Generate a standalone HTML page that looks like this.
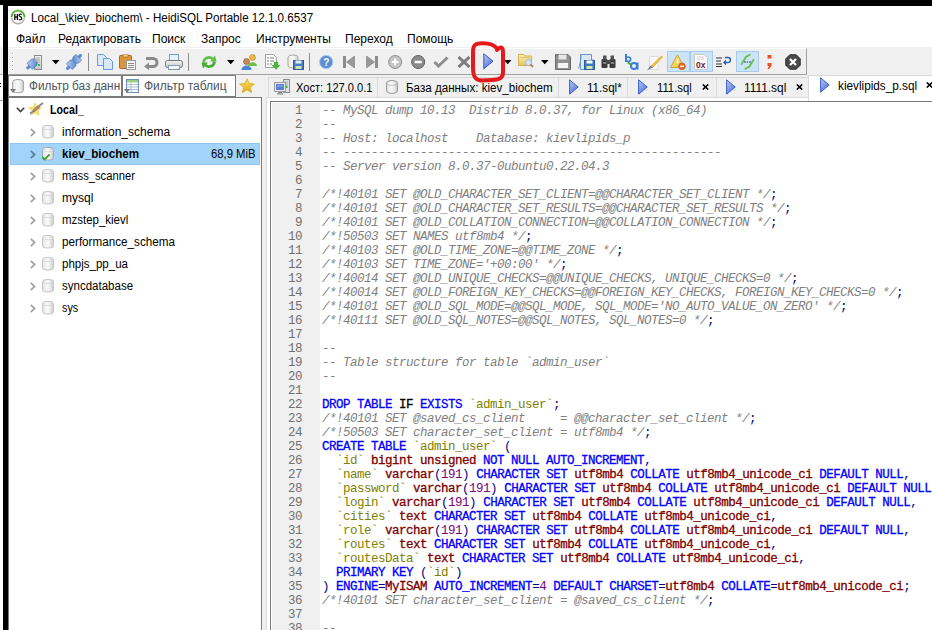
<!DOCTYPE html>
<html><head><meta charset="utf-8">
<style>
*{margin:0;padding:0;box-sizing:border-box}
html,body{width:932px;height:630px;overflow:hidden;background:#fff}
body{position:relative;font-family:"Liberation Sans",sans-serif;font-size:12px;color:#000}
.a{position:absolute}
#blktop{left:0;top:0;width:932px;height:6px;background:#000}
#blkleft{left:3px;top:0;width:5px;height:630px;background:#000}
#strip{left:0;top:5px;width:3px;height:625px;background:#fff}
#title{left:31px;top:11px;font-size:12px;transform:scaleX(0.967);transform-origin:0 0;white-space:nowrap;color:#000}
.menu{top:32px;font-size:12px;white-space:nowrap}
#tbarea{left:8px;top:47px;width:924px;height:28px;background:#f0f0f0}
#tb{left:8px;top:48px;width:799px;height:27px;border-top:1px solid #fff;border-right:1px solid #a0a0a0;border-bottom:1px solid #a0a0a0}
#tabrow{left:8px;top:75px;width:924px;height:23px;background:#f0f0f0}
.fbox{top:75px;height:22px;background:#fff;border:1px solid #7a7a7a;overflow:hidden;white-space:nowrap}
.fbox span{position:absolute;left:21px;top:3px;color:#4d5560;font-size:12px}
#tree{left:8px;top:97px;width:254px;height:540px;border:1px solid #7a7a7a;background:#fff}
#sheet{left:266px;top:97px;width:666px;height:533px;background:#fff;border-left:1px solid #dadada;border-top:1px solid #dadada}
#splitbg{left:262px;top:97px;width:4px;height:533px;background:#f0f0f0}
#editor{left:270px;top:101px;width:670px;height:540px;border:1px solid #7a7a7a;background:#fff}
#gutter{left:272px;top:103px;width:48px;height:527px;background:#f0f0f0}
#code{left:322px;top:104px;font-family:"Liberation Mono",monospace;font-size:12.5px;letter-spacing:-0.5px;line-height:14px;white-space:pre}
#gnums{left:271px;top:104px;width:31px;font-family:"Liberation Mono",monospace;font-size:12.5px;letter-spacing:-0.5px;line-height:14px;text-align:right;color:#707070}
.ln{height:14px}
.gn{height:14px}
.c{color:#808080;font-style:italic}
.k{color:#0000ff;-webkit-text-stroke:0.3px #0000ff}
.f{color:#000;-webkit-text-stroke:0.3px #000}
.t{color:#800000;-webkit-text-stroke:0.3px #800000}
.n{color:#800080}
.s{color:#000080}
.q{color:#808000}
.trow{left:9px;height:22px;width:252px}
.trow .tx{position:absolute;left:53px;top:4px;white-space:nowrap}
.sel{background:#a2d4fa;border:1px solid #92c6f0}
.ttx{top:81px;white-space:nowrap;transform-origin:0 0}
.trtx{white-space:nowrap}
.tab{top:77px;height:21px;background:#f0f0f0;border:1px solid #d9d9d9;border-bottom:none;white-space:nowrap}
.tab .tx{position:absolute;top:4px}
</style></head><body>
<div class="a" id="blktop"></div>
<div class="a" id="strip"></div>
<div class="a" style="left:0;top:47px;width:3px;height:27px;background:#f0f0f0"></div>
<div class="a" style="left:0;top:74px;width:3px;height:1px;background:#b0b0b0"></div>
<div class="a" style="left:0;top:83px;width:1px;height:1px;background:#000"></div>
<div class="a" style="left:0;top:86px;width:1px;height:1px;background:#000"></div>
<div class="a" style="left:0;top:100px;width:3px;height:1px;background:#a0a0a0"></div>
<div class="a" id="blkleft"></div>

<!-- title -->
<svg class="a" style="left:10px;top:9px" width="16" height="16" viewBox="0 0 16 16"><defs><linearGradient id="hsg" x1="0" y1="0" x2="0" y2="1"><stop offset="0" stop-color="#6cc94a"/><stop offset="0.5" stop-color="#3a9a22"/><stop offset="0.5" stop-color="#c8c8c8"/><stop offset="1" stop-color="#a8a8a8"/></linearGradient></defs><circle cx="8" cy="8" r="7.4" fill="url(#hsg)"/><circle cx="8" cy="8.2" r="5.6" fill="#fff"/><path d="M4.8 5v6M4.8 8h2.6M7.4 5v6" stroke="#111" stroke-width="1.3" fill="none"/><path d="M11.6 5.6 C11 4.8 8.9 4.8 9 6.3 C9.1 7.7 11.8 7.5 11.8 9.4 C11.8 11 9.5 11.2 8.8 10.3" stroke="#111" stroke-width="1.2" fill="none"/></svg>
<div class="a" id="title">Local_\kiev_biochem\ - HeidiSQL Portable 12.1.0.6537</div>

<div class="a menu" style="left:16px">Файл</div>
<div class="a menu" style="left:58px">Редактировать</div>
<div class="a menu" style="left:152px">Поиск</div>
<div class="a menu" style="left:201px">Запрос</div>
<div class="a menu" style="left:256px">Инструменты</div>
<div class="a menu" style="left:345px">Переход</div>
<div class="a menu" style="left:407px">Помощь</div>

<div class="a" id="tbarea"></div>
<div class="a" id="tb"></div>
<svg width="0" height="0" style="position:absolute"><defs>
<linearGradient id="gBlue" x1="0" y1="0" x2="1" y2="1"><stop offset="0" stop-color="#b9d3f3"/><stop offset="1" stop-color="#4f7fc9"/></linearGradient>
<linearGradient id="gPlay" x1="0" y1="0" x2="0.6" y2="1"><stop offset="0" stop-color="#b4c6f2"/><stop offset="0.5" stop-color="#8aa2e6"/><stop offset="1" stop-color="#4f6fd6"/></linearGradient>
<linearGradient id="gGray" x1="0" y1="0" x2="0" y2="1"><stop offset="0" stop-color="#f4f4f4"/><stop offset="1" stop-color="#c8c8c8"/></linearGradient>
<linearGradient id="gCyl" x1="0" y1="0" x2="1" y2="0"><stop offset="0" stop-color="#e6e6e6"/><stop offset="0.5" stop-color="#fafafa"/><stop offset="1" stop-color="#cfcfcf"/></linearGradient>
<linearGradient id="gGreen" x1="0" y1="0" x2="0" y2="1"><stop offset="0" stop-color="#8fd46b"/><stop offset="1" stop-color="#3e9d2a"/></linearGradient>
<linearGradient id="gStar" x1="0" y1="0" x2="0" y2="1"><stop offset="0" stop-color="#ffe35a"/><stop offset="1" stop-color="#e0a91a"/></linearGradient>
<linearGradient id="gFold" x1="0" y1="0" x2="0" y2="1"><stop offset="0" stop-color="#fdf0b0"/><stop offset="1" stop-color="#e8c866"/></linearGradient>
</defs></svg>
<svg class="a" style="left:26px;top:54px" width="16" height="16" viewBox="0 0 16 16"><rect x="8.5" y="1.5" width="7" height="14" fill="url(#gGray)" stroke="#8c8c8c"/>
<path d="M10 4h4M10 6h4M10 8h4" stroke="#a8a8a8"/><rect x="12" y="10" width="2" height="2" fill="#2fc22f"/>
<g transform="translate(4.5,11.5) rotate(-42)"><rect x="-5" y="-1.6" width="5" height="3.2" rx="1" fill="#5d8fd6"/><path d="M-1 -4 H5 L7 -2.5 V2.5 L5 4 H-1Z" fill="url(#gBlue)" stroke="#4a72b0" stroke-width="0.7"/><rect x="7" y="-2" width="2" height="4" fill="#b8b8b8"/></g></svg>
<svg class="a" style="left:52px;top:60px" width="8" height="5" viewBox="0 0 8 5"><path d="M0 0H7.5L3.75 4.2Z" fill="#000"/></svg>
<svg class="a" style="left:226.5px;top:60px" width="8" height="5" viewBox="0 0 8 5"><path d="M0 0H7.5L3.75 4.2Z" fill="#000"/></svg>
<svg class="a" style="left:503.5px;top:60px" width="8" height="5" viewBox="0 0 8 5"><path d="M0 0H7.5L3.75 4.2Z" fill="#000"/></svg>
<svg class="a" style="left:541px;top:60px" width="8" height="5" viewBox="0 0 8 5"><path d="M0 0H7.5L3.75 4.2Z" fill="#000"/></svg>
<svg class="a" style="left:66px;top:54px" width="16" height="16" viewBox="0 0 16 16"><g transform="translate(4,12) rotate(-45)"><rect x="-5" y="-1.6" width="5" height="3.2" rx="1" fill="#5d8fd6"/><path d="M-1 -4 H4 L6 -2.5 V2.5 L4 4 H-1Z" fill="url(#gBlue)" stroke="#4a72b0" stroke-width="0.7"/><rect x="6" y="-2" width="2" height="4" fill="#c8c8c8"/></g>
<g transform="translate(12,4) rotate(135)"><rect x="-5" y="-1.6" width="5" height="3.2" rx="1" fill="#5d8fd6"/><path d="M-1 -4 H3 L5 -2.5 V2.5 L3 4 H-1Z" fill="url(#gBlue)" stroke="#4a72b0" stroke-width="0.7"/></g></svg>
<div class="a" style="left:12px;top:53px;width:2px;height:2px;background:#a8a8a8;border-right:1px solid #fff;border-bottom:1px solid #fff"></div>
<div class="a" style="left:12px;top:57px;width:2px;height:2px;background:#a8a8a8;border-right:1px solid #fff;border-bottom:1px solid #fff"></div>
<div class="a" style="left:12px;top:61px;width:2px;height:2px;background:#a8a8a8;border-right:1px solid #fff;border-bottom:1px solid #fff"></div>
<div class="a" style="left:12px;top:65px;width:2px;height:2px;background:#a8a8a8;border-right:1px solid #fff;border-bottom:1px solid #fff"></div>
<div class="a" style="left:12px;top:69px;width:2px;height:2px;background:#a8a8a8;border-right:1px solid #fff;border-bottom:1px solid #fff"></div>
<div class="a" style="left:88px;top:53px;width:1px;height:18px;background:#8c8c8c"></div>
<div class="a" style="left:188px;top:53px;width:1px;height:18px;background:#8c8c8c"></div>
<div class="a" style="left:309px;top:53px;width:1px;height:18px;background:#8c8c8c"></div>
<svg class="a" style="left:96px;top:54px" width="18" height="16" viewBox="0 0 18 16"><path d="M1.5 0.5H7.5L10.5 3.5V11.5H1.5Z" fill="#dbe8f8" stroke="#6d9ad6"/>
<path d="M7.5 4.5H13.5L16.5 7.5V15.5H7.5Z" fill="#dbe8f8" stroke="#6d9ad6"/></svg>
<svg class="a" style="left:119px;top:54px" width="17" height="16" viewBox="0 0 17 16"><rect x="0.5" y="1.5" width="12" height="13" rx="1" fill="#d9963a" stroke="#a96a1f"/>
<rect x="4" y="0" width="5" height="3" fill="#f1d18a" stroke="#a96a1f" stroke-width="0.6"/>
<rect x="7.5" y="6.5" width="9" height="9" fill="#f6f6f6" stroke="#9a9a9a"/><path d="M9 9.5h6M9 11.5h6M9 13.5h6" stroke="#8a8a8a"/></svg>
<svg class="a" style="left:143px;top:55px" width="16" height="15" viewBox="0 0 16 15"><path d="M3 3.5 H10 A4 4 0 0 1 10 11.5 H5" fill="none" stroke="#8a8a8a" stroke-width="3"/>
<path d="M1 11.5 L6 7.5 V15Z" fill="#8a8a8a"/></svg>
<svg class="a" style="left:165px;top:54px" width="18" height="16" viewBox="0 0 18 16"><rect x="4.5" y="0.5" width="9" height="7" fill="#e8f0fa" stroke="#7a9bc6"/>
<rect x="0.5" y="6.5" width="17" height="7" rx="2" fill="url(#gGray)" stroke="#777"/>
<rect x="3.5" y="11.5" width="11" height="4" fill="#fafafa" stroke="#7a9bc6"/></svg>
<svg class="a" style="left:201px;top:54px" width="16" height="16" viewBox="0 0 16 16"><path d="M2.5 8.5 C3 3.5 8.5 2 11.5 4.8" fill="none" stroke="#5fbf45" stroke-width="2.6"/><path d="M9 7.5 L15.5 7.5 L14 1.5Z" fill="#5fbf45"/>
<path d="M13.5 7.5 C13 12.5 7.5 14 4.5 11.2" fill="none" stroke="#4aa838" stroke-width="2.6"/><path d="M7 8.5 L0.5 8.5 L2 14.5Z" fill="#4aa838"/></svg>
<svg class="a" style="left:241px;top:54px" width="17" height="16" viewBox="0 0 17 16"><circle cx="11.5" cy="3.5" r="3" fill="#e9b949" stroke="#b8862a" stroke-width="0.6"/><path d="M7 12 C7 7 16 7 16 12Z" fill="#6cbf4c"/>
<circle cx="5.5" cy="7.5" r="3" fill="#c9875a" stroke="#8a5530" stroke-width="0.6"/><path d="M0.5 16 C0.5 10 10.5 10 10.5 16Z" fill="#4a86d8"/></svg>
<svg class="a" style="left:265px;top:54px" width="16" height="16" viewBox="0 0 16 16"><path d="M0.5 0.5H8.5L11.5 3.5V13.5H0.5Z" fill="#fff" stroke="#a0a0a0"/>
<path d="M2 4h2M5 4h4M2 7h2M5 7h4M2 10h2M5 10h2" stroke="#777"/>
<path d="M9 8H13V11H15.5L11 15.8L6.5 11H9Z" fill="#4cb33a"/></svg>
<svg class="a" style="left:287px;top:54px" width="17" height="16" viewBox="0 0 17 16"><path d="M1 3 A5 2 0 0 1 11 3 V12 A5 2 0 0 1 1 12Z" fill="url(#gCyl)" stroke="#a8a8a8"/>
<rect x="6.5" y="6.5" width="10" height="9" fill="#4a7cc4" stroke="#2e5a9a"/><rect x="8.5" y="6.5" width="6" height="3" fill="#e8eef8"/><rect x="8.5" y="12" width="6" height="3" fill="#cfe6a8"/></svg>
<svg class="a" style="left:319px;top:55px" width="15" height="14" viewBox="0 0 15 14"><circle cx="7.2" cy="7" r="6.6" fill="#5a8ed6" stroke="#a9c6ee" stroke-width="1"/>
<text x="7.2" y="11" font-size="10" font-weight="bold" font-family="Liberation Sans" text-anchor="middle" fill="#fff">?</text></svg>
<svg class="a" style="left:343px;top:56px" width="12" height="12" viewBox="0 0 12 12"><rect x="0" y="0" width="3" height="12" fill="#8d8d8d"/><path d="M11.5 0 V12 L3.5 6Z" fill="#9a9a9a" stroke="#7a7a7a" stroke-width="0.6"/></svg>
<svg class="a" style="left:366px;top:56px" width="12" height="12" viewBox="0 0 12 12"><rect x="9" y="0" width="3" height="12" fill="#8d8d8d"/><path d="M0.5 0 V12 L8.5 6Z" fill="#9a9a9a" stroke="#7a7a7a" stroke-width="0.6"/></svg>
<svg class="a" style="left:388px;top:55px" width="15" height="14" viewBox="0 0 15 14"><circle cx="7.2" cy="7" r="6.5" fill="#c4c4c4" stroke="#8e8e8e"/><path d="M7.2 3.5V10.5M3.7 7H10.7" stroke="#fff" stroke-width="2.2"/></svg>
<svg class="a" style="left:411px;top:55px" width="15" height="14" viewBox="0 0 15 14"><circle cx="7.2" cy="7" r="6.5" fill="#8c8c8c" stroke="#5e5e5e"/><path d="M3.7 7H10.7" stroke="#fff" stroke-width="2.5"/></svg>
<svg class="a" style="left:433px;top:56px" width="16" height="12" viewBox="0 0 16 12"><path d="M1.5 6 L5.5 10 L14.5 1.5" fill="none" stroke="#8e8e8e" stroke-width="3"/></svg>
<svg class="a" style="left:457px;top:56px" width="14" height="12" viewBox="0 0 14 12"><path d="M1.5 1 L12.5 11 M12.5 1 L1.5 11" stroke="#7d7d7d" stroke-width="3"/></svg>
<svg class="a" style="left:483px;top:53px" width="11" height="17" viewBox="0 0 11 17"><path d="M0.8 0.8 L10 8.2 L0.8 15.8Z" fill="url(#gPlay)" stroke="#3a56c8" stroke-width="1"/></svg>
<svg class="a" style="left:518px;top:53px" width="17" height="16" viewBox="0 0 17 16"><path d="M0.5 1.5H5.5L7 3H13.5V12.5H0.5Z" fill="url(#gFold)" stroke="#d0ae50"/><path d="M2 4.5h10" stroke="#e0c070"/>
<circle cx="10.5" cy="9.5" r="3" fill="#d5e6f8" stroke="#9ab8dc"/><path d="M12.5 11.5L15 14" stroke="#c77b3a" stroke-width="1.8"/></svg>
<svg class="a" style="left:555px;top:54px" width="16" height="16" viewBox="0 0 16 16"><path d="M0.5 0.5H13L15.5 3V15.5H0.5Z" fill="#8f8f8f" stroke="#6a6a6a"/>
<rect x="3.5" y="0.5" width="8" height="5" fill="#e6e6e6"/><rect x="2.5" y="8.5" width="11" height="6" fill="#f4f4f4" stroke="#777" stroke-width="0.6"/></svg>
<svg class="a" style="left:578px;top:54px" width="17" height="16" viewBox="0 0 17 16"><path d="M2.5 0.5H13.5V6H16V15.5H2.5Z" fill="#dce9f8" stroke="#6a93c9"/>
<path d="M0.5 14.5 C2 10 3 6 3 1" fill="none" stroke="#6a93c9"/>
<rect x="6.5" y="6.5" width="10" height="9" fill="#3f78c6" stroke="#2d5a9c"/><rect x="8.5" y="6.5" width="6" height="3" fill="#fff"/><rect x="8.5" y="12" width="6" height="3" fill="#d2e8a4"/></svg>
<svg class="a" style="left:601px;top:55px" width="15" height="13" viewBox="0 0 15 13"><rect x="0.5" y="4" width="6" height="9" rx="1" fill="#3b3b3b"/><rect x="8.5" y="4" width="6" height="9" rx="1" fill="#3b3b3b"/>
<rect x="2" y="0.5" width="3.5" height="4" fill="#555"/><rect x="9.5" y="0.5" width="3.5" height="4" fill="#555"/><rect x="5" y="5" width="5" height="4" fill="#4a4a4a"/>
<path d="M2 8h3M10 8h3" stroke="#c8c8c8"/></svg>
<svg class="a" style="left:624px;top:53px" width="16" height="18" viewBox="0 0 16 18"><path d="M2 1V9" stroke="#3a7ee0" stroke-width="2"/><circle cx="4.3" cy="6.3" r="2.3" fill="none" stroke="#3a7ee0" stroke-width="1.7"/>
<circle cx="10" cy="13" r="3" fill="none" stroke="#3a7ee0" stroke-width="2"/><path d="M13.5 9.5V16.5" stroke="#3a7ee0" stroke-width="2"/>
<path d="M4 9.5 L7.5 12" stroke="#3aaa3a" stroke-width="2"/></svg>
<svg class="a" style="left:646px;top:55px" width="17" height="16" viewBox="0 0 17 16"><path d="M3.5 1.5H12V14.5H3.5Z" fill="#fafafa" stroke="#dcdcdc"/>
<path d="M5 11 L15.5 1 L16.5 2 L6.5 12.5Z" fill="#f3c63a" stroke="#c99a1a" stroke-width="0.6"/>
<path d="M1 15.5 L4.5 10.5 L6.8 12.6Z" fill="#6b7fa8"/></svg>
<div class="a" style="left:667px;top:51px;width:23px;height:21px;background:#cce4f7;border:1px solid #a6cbee"></div>
<div class="a" style="left:690px;top:51px;width:23px;height:21px;background:#cce4f7;border:1px solid #a6cbee"></div>
<div class="a" style="left:736px;top:51px;width:23px;height:21px;background:#cce4f7;border:1px solid #a6cbee"></div>
<svg class="a" style="left:670px;top:54px" width="17" height="16" viewBox="0 0 17 16"><path d="M7.5 0.8 L14.5 13.5 H0.5Z" fill="#f6d35a" stroke="#c9a13a"/>
<rect x="6.8" y="4.5" width="1.5" height="5" fill="#fff"/><circle cx="12" cy="12.3" r="3.4" fill="#e46b2a" stroke="#b8501a" stroke-width="0.6"/><path d="M10 12.3h4" stroke="#fff" stroke-width="1.2"/></svg>
<svg class="a" style="left:693px;top:54px" width="16" height="16" viewBox="0 0 16 16"><path d="M1.5 0.5H11L14.5 4V15.5H1.5Z" fill="#fff" stroke="#c8c8c8"/>
<path d="M4 3h7M4 5h7" stroke="#c0a0b0" stroke-width="0.6"/>
<text x="7.8" y="14" font-size="8.5" font-weight="bold" font-family="Liberation Sans" text-anchor="middle" fill="#7a1030">0x</text></svg>
<svg class="a" style="left:716px;top:56px" width="15" height="11" viewBox="0 0 15 11"><path d="M0 2h6M0 5h5M0 8h6M0 10.5h6" stroke="#333" stroke-width="1"/>
<path d="M8 6.5 H12 A2.5 2.5 0 0 0 12 1.5 H9" fill="none" stroke="#2a62b8" stroke-width="1.6"/><path d="M7 6.5 L10 3.5 V9.5Z" fill="#2a62b8"/></svg>
<svg class="a" style="left:739px;top:53px" width="17" height="17" viewBox="0 0 17 17"><path d="M10.8 1.8 L7 4 L2.5 11" stroke="#6cc04a" stroke-width="1.9" fill="none" stroke-linecap="round"/>
<path d="M14.5 6.8 L10.5 13.5 L6.5 15.8" stroke="#6cc04a" stroke-width="1.9" fill="none" stroke-linecap="round"/>
<path d="M5 9h1.6M7.6 9h1.6M10.2 9h1.6" stroke="#4a6aa0" stroke-width="1.6"/></svg>
<svg class="a" style="left:766px;top:54px" width="8" height="15" viewBox="0 0 8 15"><rect x="1.5" y="1" width="4" height="3.5" fill="#e8542a"/><path d="M1.5 9 H5.5 V12 L3 15 H1.5 L3 12 H1.5Z" fill="#e8542a"/></svg>
<svg class="a" style="left:785px;top:54px" width="16" height="16" viewBox="0 0 16 16"><path d="M4.8 0.8 H11.2 L15.2 4.8 V11.2 L11.2 15.2 H4.8 L0.8 11.2 V4.8Z" fill="#4a4a4a" stroke="#2a2a2a"/>
<path d="M5 5 L11 11 M11 5 L5 11" stroke="#fff" stroke-width="2.2"/></svg>

<div class="a" id="tabrow"></div>
<div class="a fbox" style="left:8px;width:114px"><span style="left:20px;transform:scaleX(0.985);transform-origin:0 0">Фильтр баз данн</span></div>
<div class="a fbox" style="left:122px;width:114px"><span>Фильтр таблиц</span></div>

<div class="a" id="tree">
</div>
<div class="a sel" style="left:10px;top:143px;width:250px;height:22px"></div>
<div class="a" style="left:50px;top:103px;font-weight:bold;transform:scaleX(0.89);transform-origin:0 0">Local_</div>
<div class="a" style="left:211px;top:147px;transform:scaleX(0.94);transform-origin:0 0">68,9 MiB</div>
<div class="a" id="splitbg"></div>
<div class="a" id="sheet"></div>
<div class="a" id="editor"></div>
<div class="a" id="gutter"></div>
<div class="a" id="gnums"><div class="gn">1</div><div class="gn">2</div><div class="gn">3</div><div class="gn">4</div><div class="gn">5</div><div class="gn">6</div><div class="gn">7</div><div class="gn">8</div><div class="gn">9</div><div class="gn">10</div><div class="gn">11</div><div class="gn">12</div><div class="gn">13</div><div class="gn">14</div><div class="gn">15</div><div class="gn">16</div><div class="gn">17</div><div class="gn">18</div><div class="gn">19</div><div class="gn">20</div><div class="gn">21</div><div class="gn">22</div><div class="gn">23</div><div class="gn">24</div><div class="gn">25</div><div class="gn">26</div><div class="gn">27</div><div class="gn">28</div><div class="gn">29</div><div class="gn">30</div><div class="gn">31</div><div class="gn">32</div><div class="gn">33</div><div class="gn">34</div><div class="gn">35</div><div class="gn">36</div><div class="gn">37</div><div class="gn">38</div></div>
<div class="a" id="code"><div class="ln"><span class="c">-- MySQL dump 10.13  Distrib 8.0.37, for Linux (x86_64)</span></div><div class="ln"><span class="c">--</span></div><div class="ln"><span class="c">-- Host: localhost    Database: kievlipids_p</span></div><div class="ln"><span class="c">-- ------------------------------------------------------</span></div><div class="ln"><span class="c">-- Server version 8.0.37-0ubuntu0.22.04.3</span></div><div class="ln"></div><div class="ln"><span class="c">/*!40101 SET @OLD_CHARACTER_SET_CLIENT=@@CHARACTER_SET_CLIENT */</span><span class="s">;</span></div><div class="ln"><span class="c">/*!40101 SET @OLD_CHARACTER_SET_RESULTS=@@CHARACTER_SET_RESULTS */</span><span class="s">;</span></div><div class="ln"><span class="c">/*!40101 SET @OLD_COLLATION_CONNECTION=@@COLLATION_CONNECTION */</span><span class="s">;</span></div><div class="ln"><span class="c">/*!50503 SET NAMES utf8mb4 */</span><span class="s">;</span></div><div class="ln"><span class="c">/*!40103 SET @OLD_TIME_ZONE=@@TIME_ZONE */</span><span class="s">;</span></div><div class="ln"><span class="c">/*!40103 SET TIME_ZONE=&#x27;+00:00&#x27; */</span><span class="s">;</span></div><div class="ln"><span class="c">/*!40014 SET @OLD_UNIQUE_CHECKS=@@UNIQUE_CHECKS, UNIQUE_CHECKS=0 */</span><span class="s">;</span></div><div class="ln"><span class="c">/*!40014 SET @OLD_FOREIGN_KEY_CHECKS=@@FOREIGN_KEY_CHECKS, FOREIGN_KEY_CHECKS=0 */</span><span class="s">;</span></div><div class="ln"><span class="c">/*!40101 SET @OLD_SQL_MODE=@@SQL_MODE, SQL_MODE=&#x27;NO_AUTO_VALUE_ON_ZERO&#x27; */</span><span class="s">;</span></div><div class="ln"><span class="c">/*!40111 SET @OLD_SQL_NOTES=@@SQL_NOTES, SQL_NOTES=0 */</span><span class="s">;</span></div><div class="ln"></div><div class="ln"><span class="c">--</span></div><div class="ln"><span class="c">-- Table structure for table `admin_user`</span></div><div class="ln"><span class="c">--</span></div><div class="ln"></div><div class="ln"><span class="k">DROP TABLE</span> <span class="f">IF</span> <span class="k">EXISTS</span> <span class="q">`admin_user`</span><span class="s">;</span></div><div class="ln"><span class="c">/*!40101 SET @saved_cs_client     = @@character_set_client */</span><span class="s">;</span></div><div class="ln"><span class="c">/*!50503 SET character_set_client = utf8mb4 */</span><span class="s">;</span></div><div class="ln"><span class="k">CREATE TABLE</span> <span class="q">`admin_user`</span> <span class="s">(</span></div><div class="ln">  <span class="q">`id`</span> <span class="t">bigint unsigned</span> <span class="k">NOT NULL AUTO_INCREMENT</span><span class="s">,</span></div><div class="ln">  <span class="q">`name`</span> <span class="t">varchar</span><span class="s">(</span><span class="n">191</span><span class="s">)</span> <span class="k">CHARACTER SET</span> <span class="t">utf8mb4</span> <span class="k">COLLATE</span> <span class="t">utf8mb4_unicode_ci</span> <span class="k">DEFAULT NULL</span><span class="s">,</span></div><div class="ln">  <span class="q">`password`</span> <span class="t">varchar</span><span class="s">(</span><span class="n">191</span><span class="s">)</span> <span class="k">CHARACTER SET</span> <span class="t">utf8mb4</span> <span class="k">COLLATE</span> <span class="t">utf8mb4_unicode_ci</span> <span class="k">DEFAULT NULL</span><span class="s">,</span></div><div class="ln">  <span class="q">`login`</span> <span class="t">varchar</span><span class="s">(</span><span class="n">191</span><span class="s">)</span> <span class="k">CHARACTER SET</span> <span class="t">utf8mb4</span> <span class="k">COLLATE</span> <span class="t">utf8mb4_unicode_ci</span> <span class="k">DEFAULT NULL</span><span class="s">,</span></div><div class="ln">  <span class="q">`cities`</span> <span class="t">text</span> <span class="k">CHARACTER SET</span> <span class="t">utf8mb4</span> <span class="k">COLLATE</span> <span class="t">utf8mb4_unicode_ci</span><span class="s">,</span></div><div class="ln">  <span class="q">`role`</span> <span class="t">varchar</span><span class="s">(</span><span class="n">191</span><span class="s">)</span> <span class="k">CHARACTER SET</span> <span class="t">utf8mb4</span> <span class="k">COLLATE</span> <span class="t">utf8mb4_unicode_ci</span> <span class="k">DEFAULT NULL</span><span class="s">,</span></div><div class="ln">  <span class="q">`routes`</span> <span class="t">text</span> <span class="k">CHARACTER SET</span> <span class="t">utf8mb4</span> <span class="k">COLLATE</span> <span class="t">utf8mb4_unicode_ci</span><span class="s">,</span></div><div class="ln">  <span class="q">`routesData`</span> <span class="t">text</span> <span class="k">CHARACTER SET</span> <span class="t">utf8mb4</span> <span class="k">COLLATE</span> <span class="t">utf8mb4_unicode_ci</span><span class="s">,</span></div><div class="ln">  <span class="k">PRIMARY KEY</span> <span class="s">(</span><span class="q">`id`</span><span class="s">)</span></div><div class="ln"><span class="s">)</span> <span class="k">ENGINE</span><span class="s">=</span><span class="t">MyISAM</span> <span class="k">AUTO_INCREMENT</span><span class="s">=</span><span class="n">4</span> <span class="k">DEFAULT CHARSET</span><span class="s">=</span><span class="t">utf8mb4</span> <span class="k">COLLATE</span><span class="s">=</span><span class="t">utf8mb4_unicode_ci</span><span class="s">;</span></div><div class="ln"><span class="c">/*!40101 SET character_set_client = @saved_cs_client */</span><span class="s">;</span></div><div class="ln"></div><div class="ln"><span class="c">--</span></div></div>
<div class="a tab" style="left:268px;width:110px"></div>
<div class="a tab" style="left:377px;width:182px"></div>
<div class="a tab" style="left:558px;width:70px"></div>
<div class="a tab" style="left:627px;width:90px"></div>
<div class="a tab" style="left:716px;width:93px"></div>
<div class="a" style="left:268px;top:97px;width:540px;height:1px;background:#dadada"></div>
<div class="a" style="left:808px;top:75px;width:124px;height:26px;background:#fff;border-left:1px solid #d9d9d9;border-top:1px solid #d9d9d9"></div>
<svg class="a" style="left:274px;top:79px" width="16" height="16" viewBox="0 0 16 16"><rect x="9.5" y="0.5" width="6" height="13" fill="#e2e2e2" stroke="#8a8a8a"/><path d="M11 3h3M11 5h3" stroke="#aaa"/><rect x="11.5" y="6.5" width="2" height="2.5" fill="#3fb23f"/>
<rect x="0.5" y="3.5" width="11" height="9" fill="#ececec" stroke="#9a9a9a"/><rect x="2" y="5" width="8" height="6" fill="#5a7fd0"/><rect x="3" y="6" width="6" height="2" fill="#7c9ae0"/>
<path d="M4 13.5h4M3 14.8h6" stroke="#8a8a8a" stroke-width="1.2"/></svg>
<div class="a ttx" style="left:296px;transform:scaleX(0.925)">Хост: 127.0.0.1</div>
<svg class="a" style="left:386px;top:80px" width="12" height="14" viewBox="0 0 12 14"><path d="M0.6 3 A5.4 2.4 0 0 1 11.4 3 V11 A5.4 2.4 0 0 1 0.6 11Z" fill="url(#gCyl)" stroke="#959595" stroke-width="1"/><path d="M0.6 3 A5.4 2.4 0 0 0 11.4 3" fill="none" stroke="#b8b8b8" stroke-width="0.8"/></svg>
<div class="a ttx" style="left:406px;transform:scaleX(0.968)">База данных: kiev_biochem</div>
<svg class="a" style="left:569px;top:79px" width="10" height="16" viewBox="0 0 10 16"><path d="M0.6 0.8 L9.2 8 L0.6 15.2Z" fill="url(#gPlay)" stroke="#3f5fd0" stroke-width="1"/></svg>
<div class="a ttx" style="left:587px;top:81px;transform:scaleX(0.97)">11.sql*</div>
<svg class="a" style="left:638px;top:79px" width="10" height="16" viewBox="0 0 10 16"><path d="M0.6 0.8 L9.2 8 L0.6 15.2Z" fill="url(#gPlay)" stroke="#3f5fd0" stroke-width="1"/></svg>
<div class="a ttx" style="left:657px;top:81px;transform:scaleX(0.94)">111.sql</div>
<svg class="a" style="left:702px;top:84px" width="7" height="6" viewBox="0 0 7 6"><path d="M0.8 0.5 L6.2 5.5 M6.2 0.5 L0.8 5.5" stroke="#000" stroke-width="1.6"/></svg>
<svg class="a" style="left:726px;top:79px" width="10" height="16" viewBox="0 0 10 16"><path d="M0.6 0.8 L9.2 8 L0.6 15.2Z" fill="url(#gPlay)" stroke="#3f5fd0" stroke-width="1"/></svg>
<div class="a ttx" style="left:744px;top:81px;transform:scaleX(0.99)">1111.sql</div>
<svg class="a" style="left:796px;top:84px" width="7" height="6" viewBox="0 0 7 6"><path d="M0.8 0.5 L6.2 5.5 M6.2 0.5 L0.8 5.5" stroke="#000" stroke-width="1.6"/></svg>
<svg class="a" style="left:820px;top:77px" width="10" height="16" viewBox="0 0 10 16"><path d="M0.6 0.8 L9.2 8 L0.6 15.2Z" fill="url(#gPlay)" stroke="#3f5fd0" stroke-width="1"/></svg>
<div class="a ttx" style="left:838px;top:79px;transform:scaleX(0.98)">kievlipids_p.sql</div>
<svg class="a" style="left:926px;top:82px" width="7" height="6" viewBox="0 0 7 6"><path d="M0.8 0.5 L6.2 5.5 M6.2 0.5 L0.8 5.5" stroke="#000" stroke-width="1.6"/></svg>
<svg class="a" style="left:239px;top:78px" width="16" height="16" viewBox="0 0 16 16"><path d="M8 0.8 L10.1 5.6 L15.3 6 L11.3 9.4 L12.6 14.6 L8 11.8 L3.4 14.6 L4.7 9.4 L0.7 6 L5.9 5.6Z" fill="url(#gStar)" stroke="#d8a820" stroke-width="0.8"/></svg>
<svg class="a" style="left:10px;top:79px" width="16" height="16" viewBox="0 0 16 16"><path d="M2.6 2.8 A5.4 2.2 0 0 1 13.4 2.8 V11.5 A5.4 2.2 0 0 1 2.6 11.5Z" fill="url(#gCyl)" stroke="#a0a0a0"/><path d="M0 10 H6 L3 14Z" fill="#7a7a7a"/></svg>
<svg class="a" style="left:124px;top:79px" width="16" height="16" viewBox="0 0 16 16"><rect x="2.5" y="0.5" width="12" height="13" fill="#fff" stroke="#6f8fc0"/><rect x="3" y="1" width="11" height="2.5" fill="#9fcf7a"/><path d="M3 5.5h11M3 8h11M3 10.5h11M7 3.5v10" stroke="#9ab0d6" stroke-width="0.8"/><path d="M0 10 H6 L3 14Z" fill="#7a7a7a"/></svg>
<svg class="a" style="left:16px;top:107px" width="9" height="6" viewBox="0 0 9 6"><path d="M0.8 0.8 L4.5 4.6 L8.2 0.8" fill="none" stroke="#3c3c3c" stroke-width="1.5"/></svg>
<svg class="a" style="left:28px;top:102px" width="16" height="15" viewBox="0 0 16 15"><path d="M7 1 L8.9 5.2 L13.4 5.6 L10 8.6 L11.1 13.2 L7 10.8 L2.9 13.2 L4 8.6 L0.6 5.6 L5.1 5.2Z" fill="#f3df74" stroke="#f0d040" stroke-width="0.6"/>
<path d="M2 11.5 L6 9" stroke="#8a8a8a" stroke-width="2"/><path d="M6 10 L11 6 L12 4 L10 3.5 L5 8Z" fill="#b09070" stroke="#806040" stroke-width="0.5"/><path d="M11 4 L15 1" stroke="#8a8a8a" stroke-width="2"/></svg>
<svg class="a" style="left:30px;top:128px" width="6" height="9" viewBox="0 0 6 9"><path d="M0.8 0.8 L4.6 4.5 L0.8 8.2" fill="none" stroke="#a4a4a4" stroke-width="1.8"/></svg>
<svg class="a" style="left:42px;top:125px" width="12" height="14" viewBox="0 0 12 14"><path d="M0.6 2.6 A5.4 2.1 0 0 1 11.4 2.6 V10.9 A5.4 2.1 0 0 1 0.6 10.9Z" fill="url(#gCyl)" stroke="#c4c4c4" stroke-width="1"/><path d="M0.6 2.6 A5.4 2.1 0 0 0 11.4 2.6" fill="none" stroke="#d6d6d6" stroke-width="0.8"/></svg>
<div class="a trtx" style="left:62px;top:125px;transform:scaleX(1.0);transform-origin:0 0">information_schema</div>
<svg class="a" style="left:30px;top:150px" width="6" height="9" viewBox="0 0 6 9"><path d="M0.8 0.8 L4.6 4.5 L0.8 8.2" fill="none" stroke="#5f7f9f" stroke-width="1.8"/></svg>
<svg class="a" style="left:42px;top:147px" width="12" height="14" viewBox="0 0 12 14"><path d="M0.6 2.6 A5.4 2.1 0 0 1 11.4 2.6 V10.9 A5.4 2.1 0 0 1 0.6 10.9Z" fill="url(#gCyl)" stroke="#a8a8a8" stroke-width="1"/><path d="M0.6 2.6 A5.4 2.1 0 0 0 11.4 2.6" fill="none" stroke="#d6d6d6" stroke-width="0.8"/><path d="M0 10 L2.5 12.5 L7.5 7.5" fill="none" stroke="#3aa03a" stroke-width="1.8"/></svg>
<div class="a trtx" style="left:62px;top:147px;font-weight:bold;transform:scaleX(0.973);transform-origin:0 0">kiev_biochem</div>
<svg class="a" style="left:30px;top:172px" width="6" height="9" viewBox="0 0 6 9"><path d="M0.8 0.8 L4.6 4.5 L0.8 8.2" fill="none" stroke="#a4a4a4" stroke-width="1.8"/></svg>
<svg class="a" style="left:42px;top:169px" width="12" height="14" viewBox="0 0 12 14"><path d="M0.6 2.6 A5.4 2.1 0 0 1 11.4 2.6 V10.9 A5.4 2.1 0 0 1 0.6 10.9Z" fill="url(#gCyl)" stroke="#c4c4c4" stroke-width="1"/><path d="M0.6 2.6 A5.4 2.1 0 0 0 11.4 2.6" fill="none" stroke="#d6d6d6" stroke-width="0.8"/></svg>
<div class="a trtx" style="left:62px;top:169px;transform:scaleX(0.934);transform-origin:0 0">mass_scanner</div>
<svg class="a" style="left:30px;top:194px" width="6" height="9" viewBox="0 0 6 9"><path d="M0.8 0.8 L4.6 4.5 L0.8 8.2" fill="none" stroke="#a4a4a4" stroke-width="1.8"/></svg>
<svg class="a" style="left:42px;top:191px" width="12" height="14" viewBox="0 0 12 14"><path d="M0.6 2.6 A5.4 2.1 0 0 1 11.4 2.6 V10.9 A5.4 2.1 0 0 1 0.6 10.9Z" fill="url(#gCyl)" stroke="#c4c4c4" stroke-width="1"/><path d="M0.6 2.6 A5.4 2.1 0 0 0 11.4 2.6" fill="none" stroke="#d6d6d6" stroke-width="0.8"/></svg>
<div class="a trtx" style="left:62px;top:191px;transform:scaleX(1.0);transform-origin:0 0">mysql</div>
<svg class="a" style="left:30px;top:216px" width="6" height="9" viewBox="0 0 6 9"><path d="M0.8 0.8 L4.6 4.5 L0.8 8.2" fill="none" stroke="#a4a4a4" stroke-width="1.8"/></svg>
<svg class="a" style="left:42px;top:213px" width="12" height="14" viewBox="0 0 12 14"><path d="M0.6 2.6 A5.4 2.1 0 0 1 11.4 2.6 V10.9 A5.4 2.1 0 0 1 0.6 10.9Z" fill="url(#gCyl)" stroke="#c4c4c4" stroke-width="1"/><path d="M0.6 2.6 A5.4 2.1 0 0 0 11.4 2.6" fill="none" stroke="#d6d6d6" stroke-width="0.8"/></svg>
<div class="a trtx" style="left:62px;top:213px;transform:scaleX(0.955);transform-origin:0 0">mzstep_kievl</div>
<svg class="a" style="left:30px;top:238px" width="6" height="9" viewBox="0 0 6 9"><path d="M0.8 0.8 L4.6 4.5 L0.8 8.2" fill="none" stroke="#a4a4a4" stroke-width="1.8"/></svg>
<svg class="a" style="left:42px;top:235px" width="12" height="14" viewBox="0 0 12 14"><path d="M0.6 2.6 A5.4 2.1 0 0 1 11.4 2.6 V10.9 A5.4 2.1 0 0 1 0.6 10.9Z" fill="url(#gCyl)" stroke="#c4c4c4" stroke-width="1"/><path d="M0.6 2.6 A5.4 2.1 0 0 0 11.4 2.6" fill="none" stroke="#d6d6d6" stroke-width="0.8"/></svg>
<div class="a trtx" style="left:62px;top:235px;transform:scaleX(0.973);transform-origin:0 0">performance_schema</div>
<svg class="a" style="left:30px;top:260px" width="6" height="9" viewBox="0 0 6 9"><path d="M0.8 0.8 L4.6 4.5 L0.8 8.2" fill="none" stroke="#a4a4a4" stroke-width="1.8"/></svg>
<svg class="a" style="left:42px;top:257px" width="12" height="14" viewBox="0 0 12 14"><path d="M0.6 2.6 A5.4 2.1 0 0 1 11.4 2.6 V10.9 A5.4 2.1 0 0 1 0.6 10.9Z" fill="url(#gCyl)" stroke="#c4c4c4" stroke-width="1"/><path d="M0.6 2.6 A5.4 2.1 0 0 0 11.4 2.6" fill="none" stroke="#d6d6d6" stroke-width="0.8"/></svg>
<div class="a trtx" style="left:62px;top:257px;transform:scaleX(0.96);transform-origin:0 0">phpjs_pp_ua</div>
<svg class="a" style="left:30px;top:282px" width="6" height="9" viewBox="0 0 6 9"><path d="M0.8 0.8 L4.6 4.5 L0.8 8.2" fill="none" stroke="#a4a4a4" stroke-width="1.8"/></svg>
<svg class="a" style="left:42px;top:279px" width="12" height="14" viewBox="0 0 12 14"><path d="M0.6 2.6 A5.4 2.1 0 0 1 11.4 2.6 V10.9 A5.4 2.1 0 0 1 0.6 10.9Z" fill="url(#gCyl)" stroke="#c4c4c4" stroke-width="1"/><path d="M0.6 2.6 A5.4 2.1 0 0 0 11.4 2.6" fill="none" stroke="#d6d6d6" stroke-width="0.8"/></svg>
<div class="a trtx" style="left:62px;top:279px;transform:scaleX(0.96);transform-origin:0 0">syncdatabase</div>
<svg class="a" style="left:30px;top:304px" width="6" height="9" viewBox="0 0 6 9"><path d="M0.8 0.8 L4.6 4.5 L0.8 8.2" fill="none" stroke="#a4a4a4" stroke-width="1.8"/></svg>
<svg class="a" style="left:42px;top:301px" width="12" height="14" viewBox="0 0 12 14"><path d="M0.6 2.6 A5.4 2.1 0 0 1 11.4 2.6 V10.9 A5.4 2.1 0 0 1 0.6 10.9Z" fill="url(#gCyl)" stroke="#c4c4c4" stroke-width="1"/><path d="M0.6 2.6 A5.4 2.1 0 0 0 11.4 2.6" fill="none" stroke="#d6d6d6" stroke-width="0.8"/></svg>
<div class="a trtx" style="left:62px;top:301px;transform:scaleX(0.9);transform-origin:0 0">sys</div><svg class="a" style="left:460px;top:34px" width="56" height="54" viewBox="460 34 56 54"><path d="M497 50 C500 46.5 503 46 503 52 L503 72 C503 78 500 79.5 492 80 L482 80.5 C475 80.5 473 76 473 68 L473 52 C473 45 475 43.3 483 43.3 C490 43.3 494 44.5 497 48.5" fill="none" stroke="#e5191b" stroke-width="4" stroke-linecap="round" stroke-linejoin="round"/></svg>

</body></html>
